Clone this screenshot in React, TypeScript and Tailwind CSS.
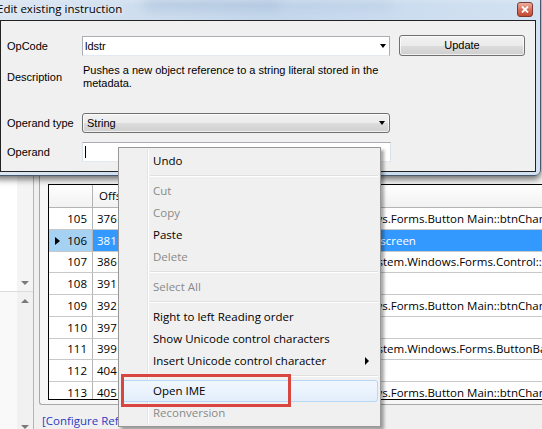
import React from "react";

type Row = { n: number; off: string; op: string; arg: string; sel?: boolean };

const rows: Row[] = [
  { n: 105, off: "376", op: "ldfld", arg: "System.Windows.Forms.Button Main::btnChangeScreen" },
  { n: 106, off: "381", op: "ldstr", arg: "Changed to Fullscreen", sel: true },
  { n: 107, off: "386", op: "callvirt", arg: "System.Void System.Windows.Forms.Control::set_Text(System.String)" },
  { n: 108, off: "391", op: "ldarg.0", arg: "" },
  { n: 109, off: "392", op: "ldfld", arg: "System.Windows.Forms.Button Main::btnChangeScreen" },
  { n: 110, off: "397", op: "ldc.i4.1", arg: "" },
  { n: 111, off: "399", op: "callvirt", arg: "System.Void System.Windows.Forms.ButtonBase::set_UseVisualStyleBackColor(System.Boolean)" },
  { n: 112, off: "404", op: "ldarg.0", arg: "" },
  { n: 113, off: "405", op: "ldfld", arg: "System.Windows.Forms.Button Main::btnChangeScreen" },
];

function DownArrow() {
  return <span className="block w-0 h-0 border-x-[4px] border-x-transparent border-t-[4px] border-t-[#7a7a7a]" />;
}

function UpArrow() {
  return <span className="block w-0 h-0 border-x-[4px] border-x-transparent border-b-[4px] border-b-[#7a7a7a]" />;
}

function ComboArrow() {
  return <span className="block w-0 h-0 border-x-[3px] border-x-transparent border-t-[4px] border-t-black" />;
}

// the app that sits behind the dialog
function Background() {
  return (
    <div className="flex h-[429px] w-full bg-[#f0f0f0]">
      {/* left tree + scrollbars */}
      <div className="flex w-[34px] flex-none flex-col border-r border-[#b5b5b5]">
        <div className="flex h-[291px] bg-white">
          <div className="flex-1" />
          <div className="flex w-[16px] flex-col justify-end bg-[#f4f4f4]">
            <div className="flex h-[17px] items-center justify-center">
              <DownArrow />
            </div>
          </div>
        </div>
        <div className="flex flex-1 border-t border-[#dcdcdc] bg-[#f9f9f9]">
          <div className="flex-1" />
          <div className="flex w-[16px] flex-col justify-between bg-[#f1f1f1]">
            <div className="flex h-[17px] items-center justify-center">
              <UpArrow />
            </div>
            <div className="flex h-[17px] translate-y-[6px] items-center justify-center">
              <DownArrow />
            </div>
          </div>
        </div>
      </div>
      <div className="w-[5px] flex-none" />

      {/* instruction grid panel */}
      <div className="flex min-w-0 flex-1 flex-col">
        <div className="h-[406px] rounded-bl-[3px] border-b border-l border-[#a8a8a8] bg-[#f7f7f7] pl-[8px] pt-[184px]">
          <div className="h-[216px] w-[540px] overflow-hidden border border-black bg-white font-['Open_Sans',sans-serif] text-[11.5px] text-black">
            <div className="flex h-[23px] border-b border-[#b4b4b4] bg-gradient-to-b from-white to-[#f1f1f1]">
              <div className="w-[44px] flex-none border-r border-[#b4b4b4]" />
              <div className="flex w-[60px] flex-none items-center border-r border-[#b4b4b4] pl-[6px]">Offset</div>
              <div className="flex w-[139px] flex-none items-center border-r border-[#b4b4b4] pl-[4px]">OpCode</div>
              <div className="flex flex-1 items-center pl-[4px]">Operand</div>
            </div>
            {rows.map((r) => (
              <div key={r.n} className="flex h-[21.75px] border-b border-[#c8c8c8]">
                <div
                  className={`relative flex w-[44px] flex-none items-center justify-end border-r border-[#b4b4b4] pr-[5px] ${
                    r.sel ? "bg-[#a5d1f2]" : "bg-white"
                  }`}
                >
                  {r.sel && (
                    <span className="absolute left-[6px] top-[7px] h-0 w-0 border-y-[4px] border-l-[5px] border-y-transparent border-l-black" />
                  )}
                  {r.n}
                </div>
                <div
                  className={`flex w-[60px] flex-none items-center border-r border-[#c8c8c8] pl-[4px] ${
                    r.sel ? "bg-[#3399ff] text-white" : ""
                  }`}
                >
                  {r.off}
                </div>
                <div
                  className={`flex w-[139px] flex-none items-center border-r border-[#c8c8c8] pl-[4px] ${
                    r.sel ? "bg-[#3399ff] text-white" : ""
                  }`}
                >
                  {r.op}
                </div>
                <div
                  className={`flex flex-1 items-center overflow-hidden whitespace-nowrap pl-[5px] ${
                    r.sel ? "bg-[#3399ff] text-white" : ""
                  }`}
                >
                  {r.arg}
                </div>
              </div>
            ))}
          </div>
        </div>
        <div className="pl-[3px] pt-[8px] font-['Open_Sans',sans-serif] text-[11.5px] leading-[16px] text-[#2b3bc4]">
          [Configure Reflexil]
        </div>
      </div>
    </div>
  );
}

function Dialog() {
  return (
    <div className="absolute left-[-8px] top-[-10px] flex h-[186px] w-[549px] flex-col rounded-[6px] border border-[#4a5a6e] bg-gradient-to-r from-[#dbe6f2] via-[#c4d7ec] to-[#d3e2f2] shadow-[0_3px_7px_rgba(0,0,0,0.6)]">
      {/* title bar (glass) */}
      <div className="relative flex h-[29px] items-start overflow-hidden pl-[4px] pr-[7px]">
        <div className="absolute left-[150px] top-[8px] h-[10px] w-[140px] rounded-full bg-[#9fb8d4] opacity-60 blur-[6px]" />
        <div className="absolute left-[290px] top-[10px] h-[8px] w-[110px] rounded-full bg-[#b2c8df] opacity-60 blur-[6px]" />
        <div className="absolute inset-x-0 top-0 h-[14px] bg-gradient-to-b from-white/40 to-transparent" />
        <span className="relative mt-[10px] font-['Open_Sans',sans-serif] text-[11.5px] leading-[16px] text-black [text-shadow:0_0_6px_rgba(255,255,255,0.9)]">
          Edit existing instruction
        </span>
        <div className="relative ml-auto mt-[11px] flex h-[15px] w-[16px] items-center justify-center rounded-[3px] border border-[#7e3a2e] bg-gradient-to-b from-[#eab0a2] via-[#d8705c] to-[#c4482f]">
          <svg width="8" height="7" viewBox="0 0 8 7">
            <path d="M1 0.5 L7 6.5 M7 0.5 L1 6.5" stroke="white" strokeWidth="1.8" />
          </svg>
        </div>
      </div>

      {/* client area */}
      <div className="ml-[7px] h-[152px] w-[536px] border border-[#222] bg-[#f0f0f0] pl-[6px] pt-[15px] font-['Liberation_Sans',Arial,sans-serif] text-[11px] text-black">
        <div className="flex items-start">
          <div className="flex h-[20px] w-[75px] items-center">OpCode</div>
          <div className="flex h-[20px] w-[308px] items-center border border-[#abadb3] border-b-[#e3e9ef] bg-white pl-[2px] pr-[3px]">
            <span className="flex-1">ldstr</span>
            <ComboArrow />
          </div>
          <div className="ml-[9px] -mt-[1px] flex h-[21px] w-[126px] items-center justify-center rounded-[3px] border border-[#707070] bg-[linear-gradient(#f2f2f2_0%,#ebebeb_50%,#dddddd_51%,#cfcfcf_100%)] shadow-[inset_0_0_0_1px_rgba(255,255,255,0.7)]">
            Update
          </div>
        </div>

        <div className="mt-[8px] flex items-center">
          <div className="w-[76px]">Description</div>
          <div className="w-[300px] leading-[13px]">
            Pushes a new object reference to a string literal stored in the metadata.
          </div>
        </div>

        <div className="mt-[23px] flex items-center">
          <div className="w-[75px]">Operand type</div>
          <div className="flex h-[20px] w-[308px] items-center rounded-[3px] border border-[#707070] bg-[linear-gradient(#f2f2f2_0%,#ebebeb_50%,#dddddd_51%,#cfcfcf_100%)] pl-[4px] pr-[4px] shadow-[inset_0_0_0_1px_rgba(255,255,255,0.7)]">
            <span className="flex-1">String</span>
            <ComboArrow />
          </div>
        </div>

        <div className="mt-[9px] flex items-center">
          <div className="w-[75px]">Operand</div>
          <div className="flex h-[20px] w-[309px] items-center border border-[#abadb3] border-b-[#e3e9ef] border-x-[#dbdfe6] bg-white pl-[2px]">
            <span className="block h-[12px] w-[1px] bg-black" />
          </div>
        </div>
      </div>
    </div>
  );
}

function MenuItem({ label, disabled, hot, arrow }: { label: string; disabled?: boolean; hot?: boolean; arrow?: boolean }) {
  return (
    <div
      className={`flex h-[22px] items-center rounded-[3px] border pl-[31px] pr-[8px] ${
        hot ? "border-[#b8d6f6] bg-gradient-to-b from-[#f1f7fe] to-[#e3eefb]" : "border-transparent"
      } ${disabled ? "text-[#8a8a8a]" : "text-black"}`}
    >
      <span className="flex-1">{label}</span>
      {arrow && <span className="h-0 w-0 border-y-[4px] border-l-[4px] border-y-transparent border-l-black" />}
    </div>
  );
}

function Sep() {
  return (
    <div className="flex h-[8px] items-center pl-[29px]">
      <div className="h-[2px] flex-1 border-b border-t border-b-white border-t-[#e0e0e0]" />
    </div>
  );
}

function ContextMenu() {
  return (
    <div className="absolute left-[118px] top-[147px] w-[263px] border border-[#979797] bg-[#f0f0f0] p-[2px] font-['Open_Sans',sans-serif] text-[11.5px] shadow-[3px_3px_3px_rgba(0,0,0,0.35)]">
      <div className="absolute bottom-[2px] left-[28px] top-[2px] w-[2px] border-l border-r border-l-[#e2e3e3] border-r-white" />
      <div className="relative">
        <MenuItem label="Undo" />
        <Sep />
        <MenuItem label="Cut" disabled />
        <MenuItem label="Copy" disabled />
        <MenuItem label="Paste" />
        <MenuItem label="Delete" disabled />
        <Sep />
        <MenuItem label="Select All" disabled />
        <Sep />
        <MenuItem label="Right to left Reading order" />
        <MenuItem label="Show Unicode control characters" />
        <MenuItem label="Insert Unicode control character" arrow />
        <Sep />
        <MenuItem label="Open IME" hot />
        <MenuItem label="Reconversion" disabled />
      </div>
    </div>
  );
}

export default function App() {
  return (
    <div className="relative h-[429px] w-[542px] overflow-hidden bg-[#f0f0f0]">
      <Background />
      <Dialog />
      <ContextMenu />
      {/* red annotation box */}
      <div className="absolute left-[121px] top-[374px] h-[33px] w-[170px] border-[3px] border-[#d9453f]" />
    </div>
  );
}
